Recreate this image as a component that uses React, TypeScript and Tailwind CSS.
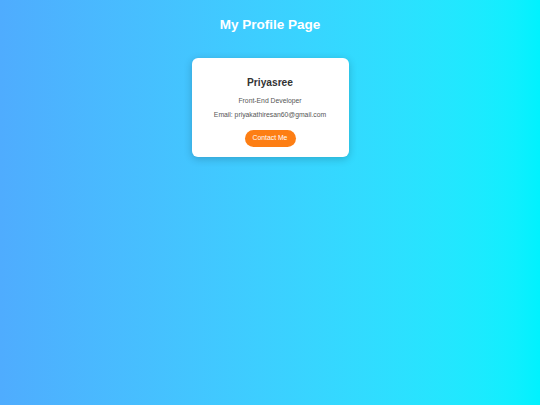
export default function App() {
  return (
    <div
      className="min-h-[405px] w-full bg-gradient-to-r from-[#4facfe] to-[#00f2fe] pt-[17px] flex flex-col items-center"
      style={{ fontFamily: '"Liberation Sans", Arial, sans-serif' }}
    >
      <h1 className="text-[13.5px] leading-[16px] font-bold text-white">My Profile Page</h1>

      <div className="mt-[25px] w-[157px] rounded-[6px] bg-white pt-[19px] pb-[10px] flex flex-col items-center shadow-[0_2px_8px_rgba(0,0,0,0.2)]">
        <h2 className="text-[10.2px] leading-[12px] font-bold text-[#333]">Priyasree</h2>
        <p className="mt-[8px] text-[6.8px] leading-[8px] text-[#555]">Front-End Developer</p>
        <p className="mt-[6px] text-[6.8px] leading-[8px] text-[#555]">Email: priyakathiresan60@gmail.com</p>
        <button className="mt-[11px] h-[16.5px] w-[51px] rounded-full bg-[#fd7e14] text-[6.8px] text-white">
          Contact Me
        </button>
      </div>
    </div>
  )
}
